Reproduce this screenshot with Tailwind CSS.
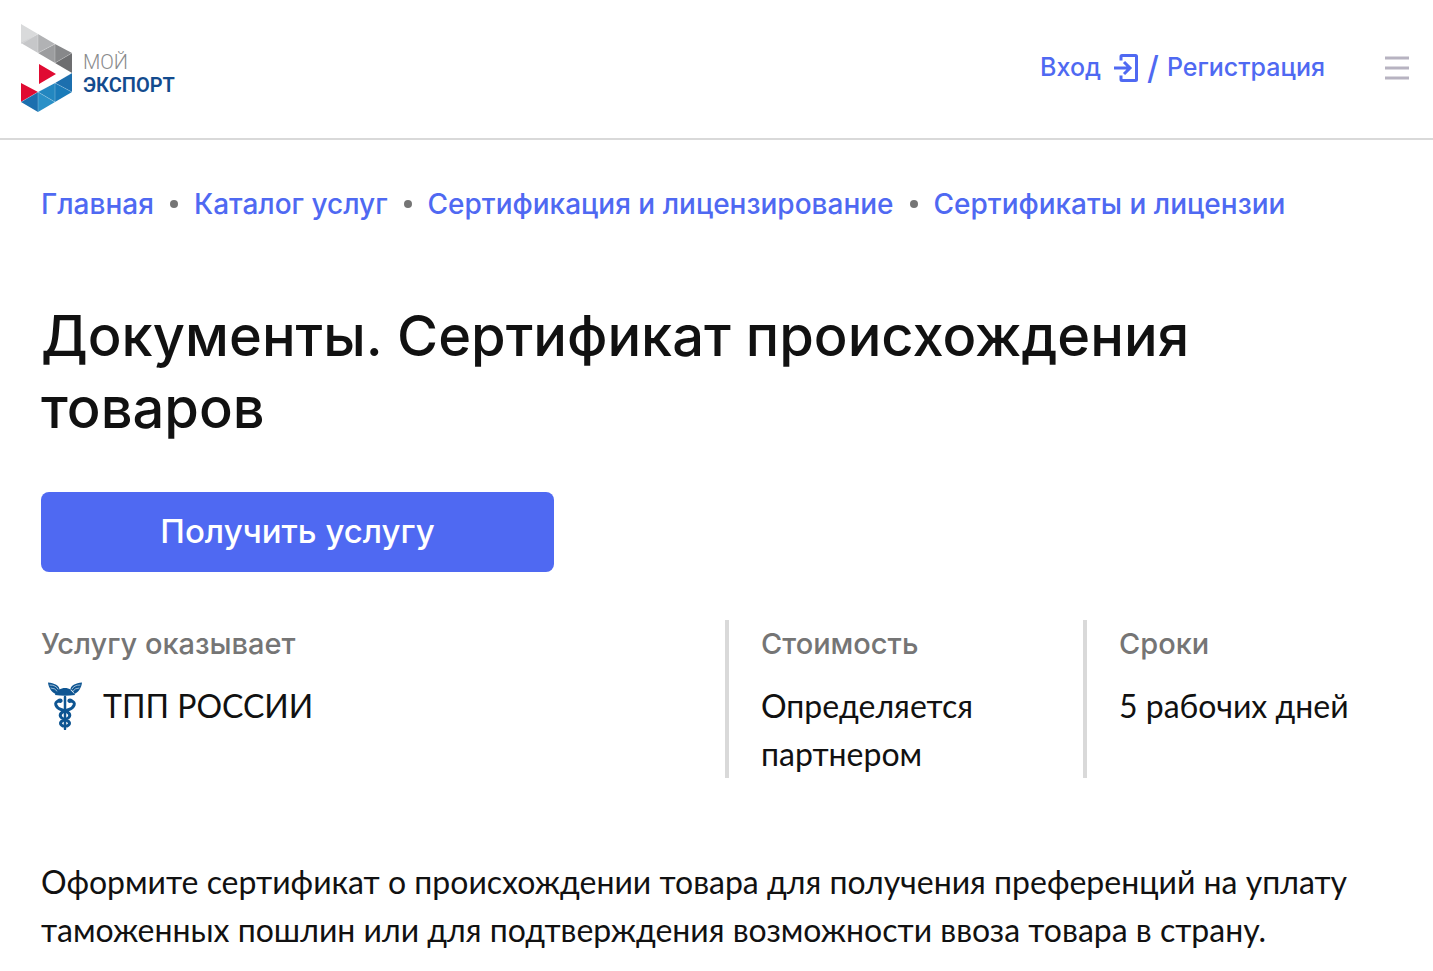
<!DOCTYPE html>
<html lang="ru">
<head>
<meta charset="utf-8">
<meta name="viewport" content="width=device-width, initial-scale=1">
<title>Мой экспорт</title>
<script src="https://cdn.jsdelivr.net/npm/@tailwindcss/browser@4"></script>
</head>
<body class="bg-white font-['Inter',sans-serif] text-[#111111]">
<header class="flex h-[140px] items-center border-b-2 border-[#d9d9d9] pr-6 pb-0.5 pl-5">
  <a href="#" aria-label="Мой экспорт" class="block">
    <svg width="156" height="92" viewBox="20 22 156 92">
      <path fill="#d9dadb" d="M21 24 38 34 21 44z"/>
      <path fill="#c6c7c9" d="M38 34V53L21 43z"/>
      <path fill="#b1b2b4" d="M38 34 55 44 38 53z"/>
      <path fill="#9c9d9f" d="M55 44V63L38 53z"/>
      <path fill="#87888a" d="M55 44 72 53 55 63z"/>
      <path fill="#6d6e70" d="M72 53V73L55 63z"/>
      <path fill="#e00b32" d="M39 64 56 74 39 84zM21 83 38 92 21 102z"/>
      <path fill="#1c6fae" d="M38 92V112L21 102zM72 73V92L55 83z"/>
      <path fill="#2a90c7" d="M38 92 55 102 38 112z"/>
      <path fill="#2387c0" d="M55 83V102L38 92z"/>
      <path fill="#1a7bb9" d="M55 83 72 92 55 102z"/>
      <path fill="none" stroke="#fff" stroke-opacity=".4" stroke-width=".6" d="M21 44 38 34V53L55 44V63L72 53M21 102 38 92V112M38 92 72 73M55 83V102M38 92 55 102M55 83 72 92"/>
      <text x="83" y="69" font-family="Roboto, sans-serif" font-size="20" font-weight="300" fill="#8a8b8d">МОЙ</text>
      <text x="83" y="92" font-family="Roboto, sans-serif" font-size="20" font-weight="600" fill="#134b8e">ЭКСПОРТ</text>
    </svg>
  </a>
  <nav class="ml-auto flex items-center text-[25px] font-medium text-[#4f69f2]">
    <a href="#" class="flex items-center gap-3"><span>Вход</span>
      <svg width="26" height="30" viewBox="0 0 26 30" fill="none" stroke="currentColor" stroke-width="3"><path d="M8 7.500V3.500Q8 2.500 9 2.500H22.500Q23.500 2.500 23.500 3.500V26.500Q23.500 27.500 22.500 27.500H9Q8 27.500 8 26.500V22.500M1 15H17M11 9 17 15 11 21"/></svg>
    </a>
    <span class="px-2 text-[32px]">/</span>
    <a href="#">Регистрация</a>
  </nav>
  <button type="button" aria-label="Меню" class="ml-[60px]">
    <svg width="24" height="24" viewBox="0 0 24 24" stroke="#b7b3c1" stroke-width="3"><path d="M0 2H24M0 12H24M0 22H24"/></svg>
  </button>
</header>
<main class="px-[41px]">
  <nav aria-label="Навигация" class="pt-11">
    <ol class="flex items-center gap-4 text-[28px] leading-10 font-medium text-[#4f69f2]">
      <li><a href="#">Главная</a></li>
      <li aria-hidden="true" class="size-2 rounded-full bg-[#757575]"></li>
      <li><a href="#">Каталог услуг</a></li>
      <li aria-hidden="true" class="size-2 rounded-full bg-[#757575]"></li>
      <li><a href="#">Сертификация и лицензирование</a></li>
      <li aria-hidden="true" class="size-2 rounded-full bg-[#757575]"></li>
      <li><a href="#">Сертификаты и лицензии</a></li>
    </ol>
  </nav>
  <h1 class="mt-[76px] text-[56px] leading-[72px] font-medium">Документы. Сертификат происхождения товаров</h1>
  <button type="button" class="mt-12 h-20 w-[513px] rounded-lg bg-[#4f69f2] text-[33px] font-medium text-white">Получить услугу</button>
  <dl class="mt-12 grid grid-cols-[684fr_358fr_309fr]">
    <div>
      <dt class="text-[29px] leading-12 font-medium text-[#757575]">Услугу оказывает</dt>
      <dd class="mt-[14px] flex items-center gap-[14px] font-['Lato',sans-serif] text-[32px] leading-12">
        <svg width="48" height="48" viewBox="0 0 48 48" fill="none" stroke="#0e5592" stroke-linecap="round">
          <path fill="#0e5592" stroke="none" d="M14 13C15.500 8 20 6 24 6S32.500 8 34 13Q24 14.500 14 13zM7 .5C13 1 19 3.500 18.500 8L14.500 12C10 10 7.500 5 7 .5zM41 .5C35 1 29 3.500 29.500 8L33.500 12C38 10 40.500 5 41 .5z"/>
          <path stroke="#fff" stroke-width=".6" d="M9 3Q15 3 17 7M10 6Q14 6 16 9M39 3Q33 3 31 7M38 6Q34 6 32 9"/>
          <path stroke-width="2.500" d="M24 15V47"/>
          <path stroke-width="3" d="M17 19C21 16 21 21 18 19C12 20 15 26 20 27.500C25 29 30 31 28.500 34.500C27 38 20 37.500 19.500 41Q19.500 43 22 44M31 19C27 16 27 21 30 19C36 20 33 26 28 27.500C23 29 18 31 19.500 34.500C21 38 28 37.500 28.500 41Q28.500 43 26 44"/>
        </svg>
        ТПП РОССИИ
      </dd>
    </div>
    <div class="border-l-4 border-[#d9d9d9] pl-8">
      <dt class="text-[29px] leading-12 font-medium text-[#757575]">Стоимость</dt>
      <dd class="mt-[14px] font-['Lato',sans-serif] text-[32px] leading-12">Определяется партнером</dd>
    </div>
    <div class="border-l-4 border-[#d9d9d9] pl-8">
      <dt class="text-[29px] leading-12 font-medium text-[#757575]">Сроки</dt>
      <dd class="mt-[14px] font-['Lato',sans-serif] text-[32px] leading-12">5 рабочих дней</dd>
    </div>
  </dl>
  <p class="mt-20 font-['Lato',sans-serif] text-[32px] leading-12">Оформите сертификат о происхождении товара для получения преференций на уплату таможенных пошлин или для подтверждения возможности ввоза товара в страну.</p>
</main>
</body>
</html>
